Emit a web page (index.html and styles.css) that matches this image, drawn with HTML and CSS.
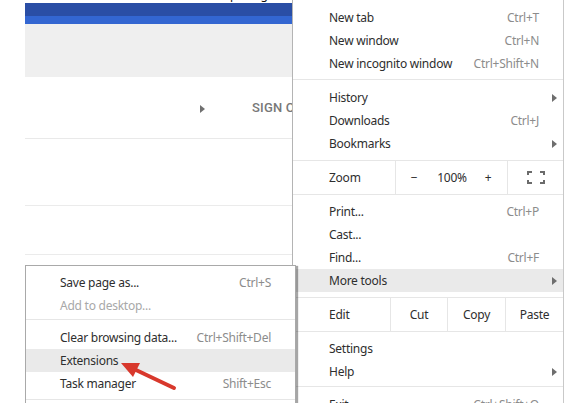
FILE: index.html
```html
<!DOCTYPE html>
<html>
<head>
<meta charset="utf-8">
<link rel="stylesheet" href="styles.css">
</head>
<body>
<div class="page">
  <div class="topline"><span>pacing</span></div>
  <div class="blue-dark"></div>
  <div class="blue-light"></div>
  <div class="toolbar"></div>
  <div class="row">
    <span class="tri"></span>
    <span class="vdiv"></span>
    <span class="sign">SIGN OUT</span>
  </div>
  <div class="band b1"></div>
  <div class="band b2"></div>
</div>

<div class="menu main">
  <div class="item"><span class="lbl">New tab</span><span class="sc">Ctrl+T</span></div>
  <div class="item"><span class="lbl">New window</span><span class="sc">Ctrl+N</span></div>
  <div class="item"><span class="lbl">New incognito window</span><span class="sc">Ctrl+Shift+N</span></div>
  <div class="sep s1"></div>
  <div class="item"><span class="lbl">History</span><span class="arr"></span></div>
  <div class="item"><span class="lbl">Downloads</span><span class="sc">Ctrl+J</span></div>
  <div class="item"><span class="lbl">Bookmarks</span><span class="arr"></span></div>
  <div class="zoom">
    <span class="zlbl">Zoom</span>
    <div class="zctl"><span>−</span><span>100%</span><span>+</span></div>
    <div class="zfull">
      <svg width="18" height="13" viewBox="0 0 18 13"><path d="M1 4V1h4M13 1h4v3M17 9v3h-4M5 12H1V9" fill="none" stroke="#6b6b6b" stroke-width="2"/></svg>
    </div>
  </div>
  <div class="item g2"><span class="lbl">Print...</span><span class="sc">Ctrl+P</span></div>
  <div class="item"><span class="lbl">Cast...</span></div>
  <div class="item"><span class="lbl">Find...</span><span class="sc">Ctrl+F</span></div>
  <div class="item hl"><span class="lbl">More tools</span><span class="arr"></span></div>
  <div class="edit">
    <span class="elbl">Edit</span>
    <span class="ecell c1">Cut</span>
    <span class="ecell c2">Copy</span>
    <span class="ecell c3">Paste</span>
  </div>
  <div class="item g2"><span class="lbl">Settings</span></div>
  <div class="item"><span class="lbl">Help</span><span class="arr"></span></div>
  <div class="sep s2"></div>
  <div class="item"><span class="lbl">Exit</span><span class="sc">Ctrl+Shift+Q</span></div>
</div>

<div class="menu sub">
  <div class="item"><span class="lbl">Save page as...</span><span class="sc">Ctrl+S</span></div>
  <div class="item"><span class="lbl dis">Add to desktop...</span></div>
  <div class="sep s3"></div>
  <div class="item"><span class="lbl">Clear browsing data...</span><span class="sc">Ctrl+Shift+Del</span></div>
  <div class="item hl"><span class="lbl">Extensions</span></div>
  <div class="item"><span class="lbl">Task manager</span><span class="sc">Shift+Esc</span></div>
  <div class="sep s4"></div>
  <div class="item"><span class="lbl">Encoding</span><span class="arr"></span></div>
</div>

<svg class="pointer" viewBox="0 0 566 403" width="566" height="403">
  <line x1="174" y1="388" x2="136" y2="370" stroke="#d8382c" stroke-width="4" stroke-linecap="round"/>
  <polygon points="121,363 140,363 133,377" fill="#d8382c"/>
</svg>
</body>
</html>
```

FILE: styles.css
```css
html, body {
  margin: 0;
  padding: 0;
  background: #ffffff;
  width: 566px;
  height: 403px;
  overflow: hidden;
  font-family: "Noto Sans", "Open Sans", sans-serif;
}

.page {
  margin-left: 25px;
  width: 267px;
  overflow: hidden;
}

.topline {
  height: 3px;
  overflow: hidden;
}
.topline span {
  display: block;
  margin-left: 205px;
  margin-top: -11px;
  font-size: 12px;
  line-height: 12px;
  color: #111;
}

.blue-dark { height: 13px; background: #2a4ea5; }
.blue-light { height: 8px; background: #3366d1; }
.toolbar { height: 53px; background: #efefef; }

.row {
  height: 61px;
  border-bottom: 1px solid #e9e9e9;
  display: flex;
  align-items: center;
  white-space: nowrap;
}
.tri {
  margin-left: 175px;
  width: 0;
  height: 0;
  border-top: 4px solid transparent;
  border-bottom: 4px solid transparent;
  border-left: 5px solid #707070;
  margin-top: 2px;
}
.vdiv {
  margin-left: 26px;
  width: 1px;
  height: 46px;
  background: #ececec;
}
.sign {
  margin-left: 21px;
  font-family: Roboto, "Liberation Sans", sans-serif;
  font-weight: 500;
  font-size: 13px;
  color: #787878;
  letter-spacing: 0.2px;
}
.band {
  border-bottom: 1px solid #ebebeb;
}
.b1 { height: 66px; }
.b2 { height: 48px; }

/* menus */
.menu {
  position: absolute;
  background: #fff;
  font-size: 12px;
  letter-spacing: -0.25px;
  color: #2e2e2e;
}
.main {
  left: 292px;
  top: 0;
  width: 270px;
  height: 430px;
  padding-top: 6px;
  border-left: 1px solid #b4b4b4;
  border-right: 1px solid #c9c9c9;
}
.sub {
  left: 25px;
  top: 265px;
  width: 269px;
  height: 160px;
  padding-top: 5px;
  border: 1px solid #a9a9a9;
  box-shadow: 2px 1px 1px rgba(0, 0, 0, 0.35);
}

.item {
  height: 23px;
  display: flex;
  align-items: center;
  padding: 0 24px 0 36px;
  white-space: nowrap;
}
.sub .item { padding-left: 34px; }
.lbl { flex: 1; }
.dis { color: #a8a8a8; }
.sc { color: #8c8c8c; }
.arr {
  width: 0;
  height: 0;
  border-top: 4px solid transparent;
  border-bottom: 4px solid transparent;
  border-left: 5px solid #6e6e6e;
  margin-right: -18px;
}
.hl { background: #eaeaea; }
.g2 { margin-top: 5px; }

.sep { height: 1px; background: #e6e6e6; }
.s1 { margin: 4px 0 6px; }
.s2 { margin: 3px 0 6px; }
.s3 { margin: 2px 0 6px; }
.s4 { margin: 4px 0 4px; }

.zoom, .edit {
  display: grid;
  align-items: stretch;
  border-top: 1px solid #e6e6e6;
  border-bottom: 1px solid #e6e6e6;
  height: 33px;
  margin-top: 5px;
}
.zoom { grid-template-columns: 102px 112px 1fr; }
.zlbl, .elbl {
  padding-left: 36px;
  display: flex;
  align-items: center;
}
.zctl {
  border-left: 1px solid #e6e6e6;
  display: grid;
  grid-template-columns: 36px 40px 32px;
  align-items: center;
  justify-items: center;
}
.zfull {
  border-left: 1px solid #e6e6e6;
  display: flex;
  align-items: center;
  justify-content: center;
}

.edit { grid-template-columns: 97px 57px 58px 1fr; }
.ecell {
  border-left: 1px solid #e6e6e6;
  display: flex;
  align-items: center;
  justify-content: center;
}

.pointer {
  position: absolute;
  left: 0;
  top: 0;
  pointer-events: none;
}
```
